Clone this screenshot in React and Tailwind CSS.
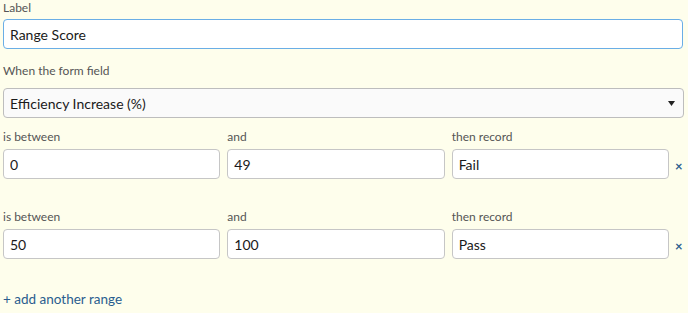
import React, { useState } from 'react';

const RANGES = [
  { from: '0', to: '49', record: 'Fail' },
  { from: '50', to: '100', record: 'Pass' },
];

const labelCls = 'block text-[12px] leading-[14px] text-[#555555]';
const inputCls =
  'w-full h-[30px] px-[6px] rounded-[4px] border border-[#c6c6c6] bg-white text-[14px] text-[#1a1a1a] outline-none';

const RangeRow = ({ range, first }) => (
  <div className={first ? 'mt-[12px]' : 'mt-[31px]'}>
    <div className="flex items-start">
      <div className="grid grid-cols-3 gap-x-[7px] w-[666px]">
        <div>
          <div className={`${labelCls} h-[19px]`}>is between</div>
          <input className={inputCls} defaultValue={range.from} />
        </div>
        <div>
          <div className={`${labelCls} h-[19px]`}>and</div>
          <input className={inputCls} defaultValue={range.to} />
        </div>
        <div>
          <div className={`${labelCls} h-[19px]`}>then record</div>
          <input className={inputCls} defaultValue={range.record} />
        </div>
      </div>
      <button className="ml-[6px] mt-[26px] text-[13px] leading-[20px] font-bold text-[#2f5f8f]">
        ×
      </button>
    </div>
  </div>
);

export default function App() {
  const [label, setLabel] = useState('Range Score');

  return (
    <div
      className="min-h-[313px] bg-[#fefeec] pl-[3px] pr-[4px] pt-[1px]"
      style={{ fontFamily: 'Lato, "Liberation Sans", sans-serif' }}
    >
      <div>
        <div className={`${labelCls} h-[18px]`}>Label</div>
        <input
          className="w-[680px] h-[30px] px-[6px] rounded-[4px] border border-[#6aaee6] bg-white text-[14px] text-[#1a1a1a] outline-none"
          value={label}
          onChange={(e) => setLabel(e.target.value)}
        />
      </div>

      <div className="mt-[15px]">
        <div className={`${labelCls} h-[24px]`}>When the form field</div>
        <div className="relative w-[681px] h-[30px] rounded-[4px] border border-[#bdbdbd] bg-[#fafafa] flex items-center px-[6px] text-[14px] text-[#1a1a1a]">
          <span>Efficiency Increase (%)</span>
          <svg className="absolute right-[8px] top-[12px]" width="7" height="5" viewBox="0 0 7 5">
            <path d="M0 0 H7 L3.5 5 Z" fill="#222" />
          </svg>
        </div>
      </div>

      {RANGES.map((r, i) => (
        <RangeRow key={i} range={r} first={i === 0} />
      ))}

      <div className="mt-[27px]">
        <a href="#" className="text-[13.5px] leading-[20px] text-[#2a5d8f]">
          + add another range
        </a>
      </div>
    </div>
  );
}
